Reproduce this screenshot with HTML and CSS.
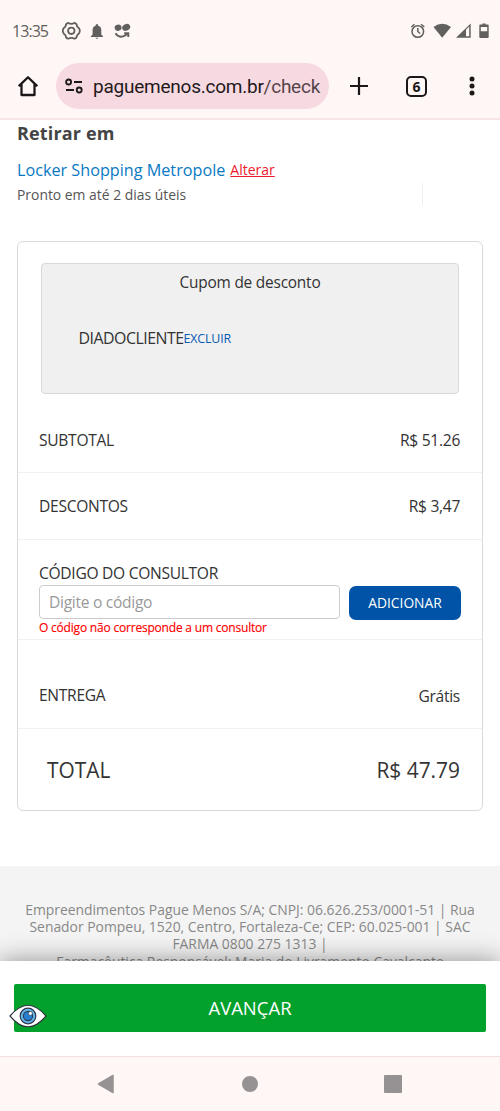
FILE: index.html
```html
<!DOCTYPE html>
<html lang="pt-BR">
<head>
<meta charset="utf-8">
<title>Pague Menos</title>
<link rel="stylesheet" href="styles.css">
</head>
<body>
<div class="phone">
  <header class="browser">
    <div class="status">
      <span class="clock">13:35</span>
      <svg class="status-left" width="72" height="20" viewBox="0 0 72 20">
        <g fill="none" stroke="#62605e" stroke-width="1.8" stroke-linejoin="round">
          <path d="M6.3 1.9Q7.7 2.8 9.3 2.8Q10.9 2.8 12.3 1.9Q14.8 2.2 14.9 4.9Q15.4 6.2 17 7.2Q18.6 9.8 17 12.4Q15.4 13.4 14.9 14.7Q14.8 17.4 12.3 17.7Q10.9 16.8 9.3 16.8Q7.7 16.8 6.3 17.7Q3.8 17.4 3.7 14.7Q3.2 13.4 1.6 12.4Q0 9.8 1.6 7.2Q3.2 6.2 3.7 4.9Q3.8 2.2 6.3 1.9Z"/>
          <circle cx="9.3" cy="9.8" r="3.2"/>
        </g>
        <g fill="#62605e"><path d="M33.7 4.8V3.7q1.2-1.6 2.4 0v1.1q3.2.9 3.2 4.5v4.2l1.7 1.8v.8H28.9v-.8l1.7-1.8V9.3q0-3.6 3.1-4.5ZM33.4 16.8h3q-1.5 2.2-3 0Z"/>
          <ellipse cx="56.1" cy="6.7" rx="3.5" ry="3.1" transform="rotate(-15 56.1 6.7)"/><ellipse cx="64.2" cy="6.4" rx="4.2" ry="3.2" transform="rotate(-28 64.2 6.4)"/></g>
        <path d="M53.5 12.2Q57.8 18.8 65 13.2M62.2 12.2H66.3V16" fill="none" stroke="#62605e" stroke-width="1.9"/>
      </svg>
      <svg class="status-right" width="82" height="20" viewBox="0 0 82 20">
        <g fill="none" stroke="#62605e" stroke-width="1.5"><circle cx="9.8" cy="10.5" r="5.8"/><path d="M9.8 7V10.5l2.4 2M3.3 6l3.2-2.8M13.1 3.2l3.2 2.8"/></g>
        <g fill="#62605e"><path d="M25.5 6Q34.2-.7 43 6L34.2 16.8ZM48 16.8 62.7 2.5v14.3Z"/><path d="M72.3 3.6h2.1V2.4h3.2v1.2h2.1q1 0 1 1v11.4q0 1-1 1h-7.4q-1 0-1-1v-11.4q0-1 1-1Z"/></g>
        <path d="M58 8.7 61.2 5.5v9.8H58ZM72.8 6h6.4v4.2h-6.4Z" fill="#fff7f5"/>
      </svg>
    </div>
    <div class="toolbar">
      <svg width="20" height="22" viewBox="0 0 20 22"><path d="M.8 11.2 10 2.2l9.2 9M3.5 9v11H16.5V9" fill="none" stroke="#1c1718" stroke-width="2.3" stroke-linejoin="round"/></svg>
      <div class="address">
        <svg width="18" height="16" viewBox="0 0 18 16"><g fill="none" stroke="#1c1718" stroke-width="1.8"><circle cx="3.6" cy="4" r="2.5"/><path d="M9 4h8M1 12h8"/><circle cx="14.2" cy="12" r="2.5"/></g></svg>
        <span class="url">paguemenos.com.br<span class="path">/check</span></span>
      </div>
      <svg class="plus" width="20" height="20" viewBox="0 0 20 20"><path d="M1 10h18M10 1v18" stroke="#1c1718" stroke-width="2.2"/></svg>
      <span class="tabs">6</span>
      <svg class="more" width="6" height="20" viewBox="0 0 6 20"><g fill="#1c1718"><circle cx="3" cy="3" r="2.5"/><circle cx="3" cy="10" r="2.5"/><circle cx="3" cy="17" r="2.5"/></g></svg>
    </div>
  </header>

  <main class="page">
    <section class="pickup">
      <h1>Retirar em</h1>
      <p class="store"><span class="store-name">Locker Shopping Metropole</span><a class="change">Alterar</a></p>
      <div class="ready-line"><span class="ready">Pronto em até 2 dias úteis</span><i class="rule"></i></div>
    </section>
    <section class="card">
      <div class="coupon">
        <p class="coupon-title">Cupom de desconto</p>
        <p class="coupon-code"><span class="code">DIADOCLIENTE</span><a class="remove">EXCLUIR</a></p>
      </div>
      <div class="row subtotal"><span class="label">SUBTOTAL</span><span class="value">R$ 51.26</span></div>
      <div class="row discount"><span class="label">DESCONTOS</span><span class="value">R$ 3,47</span></div>
      <div class="consultant">
        <label class="label">CÓDIGO DO CONSULTOR</label>
        <div class="field-line"><div class="field">Digite o código</div><div class="add"><span>ADICIONAR</span></div></div>
        <p class="error">O código não corresponde a um consultor</p>
      </div>
      <div class="row delivery"><span class="label">ENTREGA</span><span class="value free">Grátis</span></div>
      <div class="row total"><span class="total-label">TOTAL</span><span class="total-value">R$ 47.79</span></div>
    </section>
    <footer class="legal">
      <p>Empreendimentos Pague Menos S/A; CNPJ: 06.626.253/0001-51 | Rua</p>
      <p>Senador Pompeu, 1520, Centro, Fortaleza-Ce; CEP: 60.025-001 | SAC</p>
      <p>FARMA 0800 275 1313 |</p>
      <p>Farmacêutica Responsável: Maria do Livramento Cavalcante</p>
    </footer>
  </main>

  <div class="action">
    <div class="advance"><span>AVANÇAR</span></div>
    <svg class="eye" width="38" height="24" viewBox="0 0 38 24"><path d="M1 12Q19-9.5 37 12Q19 33.5 1 12Z" fill="#fff" stroke="#30333e" stroke-width="1.2"/><circle cx="19" cy="12" r="7.8" fill="#65b8ed" stroke="#30384e" stroke-width="1.2"/><circle cx="19" cy="12" r="4.6" fill="#2680cf" stroke="#30384e" stroke-width="1.1"/><circle cx="21.4" cy="9.4" r="2" fill="#fff" stroke="#30384e" stroke-width=".7"/></svg>
  </div>
  <nav class="system">
    <svg width="18" height="20" viewBox="0 0 18 20"><path d="M17 1.5v17L2.5 10Z" fill="#969293" stroke="#969293" stroke-width="1.5" stroke-linejoin="round"/></svg>
    <i class="home-dot"></i><i class="recent"></i>
  </nav>
</div>
</body>
</html>
```
FILE: styles.css
```css
* { box-sizing: border-box; }
body, p, h1 { margin: 0; }
body { font-family: "Open Sans", sans-serif; color: #333; background: #fff; }
span, a, label { white-space: nowrap; }
svg { display: block; flex: none; }
.phone { width: 500px; height: 1111px; display: flex; flex-direction: column; overflow: hidden; }

.browser { height: 120px; flex: none; background: #fff7f5; border-bottom: 2px solid #f8e5e6; }
.status { height: 55px; padding: 7px 10px 0 12px; display: flex; align-items: center; }
.clock { font-size: 16px; letter-spacing: -.95px; color: #62605e; width: 50px; }
.status-right { margin-left: auto; }
.toolbar { height: 62px; padding: 0 25px 0 18px; display: flex; align-items: center; }
.address { width: 273px; height: 46px; margin-left: 18px; padding-left: 9px; border-radius: 23px; background: #f7d9e1; display: flex; align-items: center; gap: 10px; }
.url { font-family: Roboto, sans-serif; font-size: 19px; letter-spacing: -.24px; color: #1f191b; }
.path { color: #554549; }
.plus { margin-left: 20px; }
.tabs { width: 21px; height: 21px; margin-left: 37px; border: 2px solid #1c1718; border-radius: 5px; font-size: 14px; font-weight: 700; line-height: 17px; text-align: center; color: #1c1718; }
.more { margin-left: auto; }

.page { height: 841px; flex: none; overflow: hidden; }
.pickup { height: 121px; padding: 0 17px; }
h1 { font-size: 18px; letter-spacing: .15px; line-height: 27px; color: #444; }
.store { height: 24px; margin-top: 11px; display: flex; align-items: center; gap: 5px; line-height: 24px; }
.store-name { font-size: 16.2px; color: #0879c3; }
.change { font-size: 14px; color: #ed1b2e; text-decoration: underline; }
.ready-line { display: flex; justify-content: space-between; align-items: center; height: 24px; padding-right: 60px; }
.ready { font-size: 13.9px; color: #555; }
.rule { width: 1px; height: 22px; background: #eee; }

.card { width: 466px; height: 570px; margin-left: 17px; border: 1px solid #d9d9d9; border-radius: 6px; padding-top: 21px; }
.coupon { width: 418px; height: 131px; margin-left: 23px; background: #f0f0f0; border: 1px solid #d9d9d9; border-radius: 4px; }
.coupon-title { height: 40px; line-height: 38px; text-align: center; font-size: 15.4px; letter-spacing: -.2px; }
.coupon-code { margin-top: 15px; padding-left: 36.5px; height: 38px; display: flex; align-items: center; }
.code { font-size: 15.9px; letter-spacing: -.5px; }
.remove { font-size: 12.4px; letter-spacing: -.15px; color: #075ab3; }
.row { display: flex; align-items: center; justify-content: space-between; padding: 0 22px 0 21px; border-bottom: 1px solid #f1f1f1; }
.label, .value { font-size: 15.6px; letter-spacing: -.3px; }
.subtotal { height: 79px; padding-top: 13px; }
.discount { height: 67px; }
.consultant { height: 100px; padding: 24px 21px 0; border-bottom: 1px solid #f1f1f1; display: flex; flex-direction: column; }
.consultant .label { height: 21px; line-height: 19px; }
.field-line { display: flex; gap: 9px; align-items: center; height: 34px; }
.field { width: 301px; height: 34px; padding-left: 9px; border: 1px solid #ccc; border-radius: 4px; font-size: 15.6px; letter-spacing: -.3px; line-height: 32px; color: #999; }
.add { width: 112px; height: 34px; margin-top: 1px; border-radius: 7px; background: #0053a6; color: #fff; display: flex; align-items: center; justify-content: center; font-size: 13.8px; }
.error { font-size: 12px; letter-spacing: -.2px; line-height: 18px; color: #f00; -webkit-text-stroke: .15px #f00; }
.delivery { height: 89px; padding-top: 22px; }
.free { padding-top: 2px; }
.total { height: 81px; padding-left: 29px; border-bottom: 0; font-size: 20.9px; }

.legal { height: 95px; margin-top: 55px; padding-top: 35px; background: #f4f4f4; color: #888; font-size: 13.9px; line-height: 17.2px; text-align: center; }
.legal p { white-space: nowrap; }
.action { position: relative; height: 95px; flex: none; padding: 23px 14px 0; background: #fff; box-shadow: 0 0 24px rgba(0,0,0,.42); }
.advance { height: 48px; padding-bottom: 1px; border-radius: 2px; background: #02a12c; color: #fff; font-size: 18.5px; display: flex; align-items: center; justify-content: center; }
.eye { position: absolute; left: 9px; top: 43px; }
.system { position: relative; height: 56px; flex: none; padding: 0 98px 2px 96px; background: #fff7f5; border-top: 1px solid #f4dfe0; display: flex; align-items: center; justify-content: space-between; }
.home-dot { width: 16px; height: 16px; margin-left: 2px; border-radius: 50%; background: #969293; }
.recent { width: 18px; height: 18px; border-radius: 1px; background: #969293; }
```
